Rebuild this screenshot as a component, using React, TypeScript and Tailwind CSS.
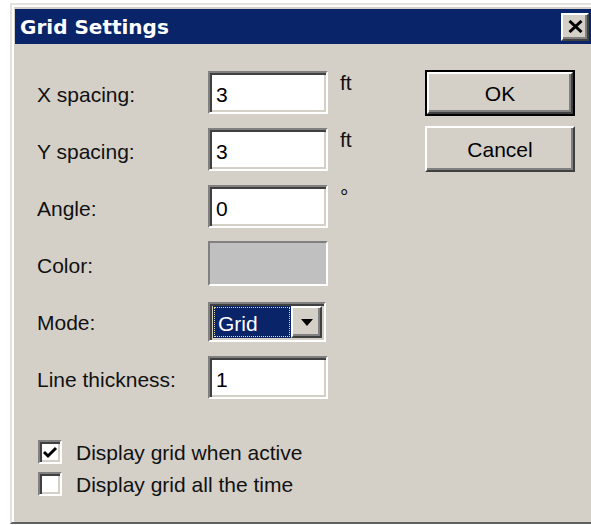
import React from "react";

const sunken =
  "border-2 border-t-[#808080] border-l-[#808080] border-b-white border-r-white shadow-[inset_2px_2px_0_#404040,inset_-2px_-2px_0_#d4d0c8]";
const raised =
  "border-2 border-t-white border-l-white border-b-[#404040] border-r-[#404040] shadow-[inset_-2px_-2px_0_#808080]";

function Label({ children }: { children: React.ReactNode }) {
  return <div className="pt-[4px] leading-[21px] text-[#111]">{children}</div>;
}

function Field({ value }: { value: string }) {
  return (
    <div className={`${sunken} h-[43px] w-[120px] bg-white flex items-center pl-[6px] pt-[4px] leading-[21px]`}>
      {value}
    </div>
  );
}

function Unit({ children }: { children?: React.ReactNode }) {
  return <div className="self-start mt-[1px] leading-[21px] text-[#111]">{children}</div>;
}

function CheckBox({ checked, label }: { checked: boolean; label: string }) {
  return (
    <div className="flex items-center h-[32px]">
      <div className={`${sunken} w-[24px] h-[24px] bg-white flex items-center justify-center`}>
        {checked && (
          <svg width="16" height="13" viewBox="0 0 16 13">
            <path d="M2 6 L6 10 L14 2" fill="none" stroke="#000" strokeWidth="3" />
          </svg>
        )}
      </div>
      <span className="ml-[14px] leading-[21px] text-[#111]">{label}</span>
    </div>
  );
}

export default function App() {
  return (
    <div className="w-[591px] h-[525px] bg-white overflow-hidden font-['Liberation_Sans',Arial,sans-serif] text-[21px] text-black">
      <div className="ml-[10px] mt-[3px] w-[581px] h-[521px] bg-[#d4d0c8] border-t-2 border-l-2 border-t-[#e4e2dc] border-l-[#e4e2dc] border-b-2 border-b-[#606060] shadow-[inset_2px_2px_0_#ffffff] pt-[4px] pl-[3px] flex flex-col overflow-hidden">
        {/* caption bar */}
        <div className="h-[35px] bg-[#0a246a] flex items-center justify-between pl-[5px] pr-[2px]">
          <span className="font-['DejaVu_Sans',sans-serif] font-bold text-[20px] text-white leading-none pt-[1px]">
            Grid Settings
          </span>
          <div className={`${raised} w-[28px] h-[28px] bg-[#d4d0c8] flex items-center justify-center`}>
            <svg width="15" height="13" viewBox="0 0 15 13">
              <path d="M1.5 1 L13.5 12 M13.5 1 L1.5 12" stroke="#000" strokeWidth="3" />
            </svg>
          </div>
        </div>

        {/* dialog body */}
        <div className="flex items-start pl-[22px] pt-[26px]">
          <div className="w-[388px] mt-[1px]">
            <div className="grid grid-cols-[159px_120px_auto] auto-rows-[43px] gap-y-[14px] gap-x-[12px] items-center">
              <Label>X spacing:</Label>
              <Field value="3" />
              <Unit>ft</Unit>

              <Label>Y spacing:</Label>
              <Field value="3" />
              <Unit>ft</Unit>

              <Label>Angle:</Label>
              <Field value="0" />
              <Unit>°</Unit>

              <Label>Color:</Label>
              <div className="h-[45px] w-[120px] bg-[#c0c0c0] border-2 border-t-[#808080] border-l-[#808080] border-b-white border-r-white" />
              <Unit />

              <Label>Mode:</Label>
              <div className={`${sunken} self-start mt-[3px] h-[40px] w-[118px] bg-[#d4d0c8] flex items-center pl-[3px] pr-[2px]`}>
                <div className="h-[32px] w-[78px] bg-[#0a246a] outline outline-1 outline-dotted outline-[#e8dc98] -outline-offset-2 text-white flex items-center pl-[5px] pt-[2px] leading-[21px]">
                  Grid
                </div>
                <div className={`${raised} ml-auto h-[32px] w-[31px] bg-[#d4d0c8] flex items-center justify-center`}>
                  <svg width="12" height="7" viewBox="0 0 12 7">
                    <path d="M0 0 H12 L6 7 Z" fill="#000" />
                  </svg>
                </div>
              </div>
              <Unit />

              <Label>Line thickness:</Label>
              <Field value="1" />
              <Unit />
            </div>

            <div className="mt-[37px] pl-[1px] flex flex-col">
              <CheckBox checked label="Display grid when active" />
              <CheckBox checked={false} label="Display grid all the time" />
            </div>
          </div>

          <div className="flex flex-col gap-[10px] w-[150px]">
            <div className="border-2 border-black">
              <div className={`${raised} h-[42px] bg-[#d4d0c8] flex items-center justify-center leading-[21px]`}>
                OK
              </div>
            </div>
            <div className={`${raised} h-[46px] bg-[#d4d0c8] flex items-center justify-center leading-[21px]`}>
              Cancel
            </div>
          </div>
        </div>
      </div>
    </div>
  );
}
